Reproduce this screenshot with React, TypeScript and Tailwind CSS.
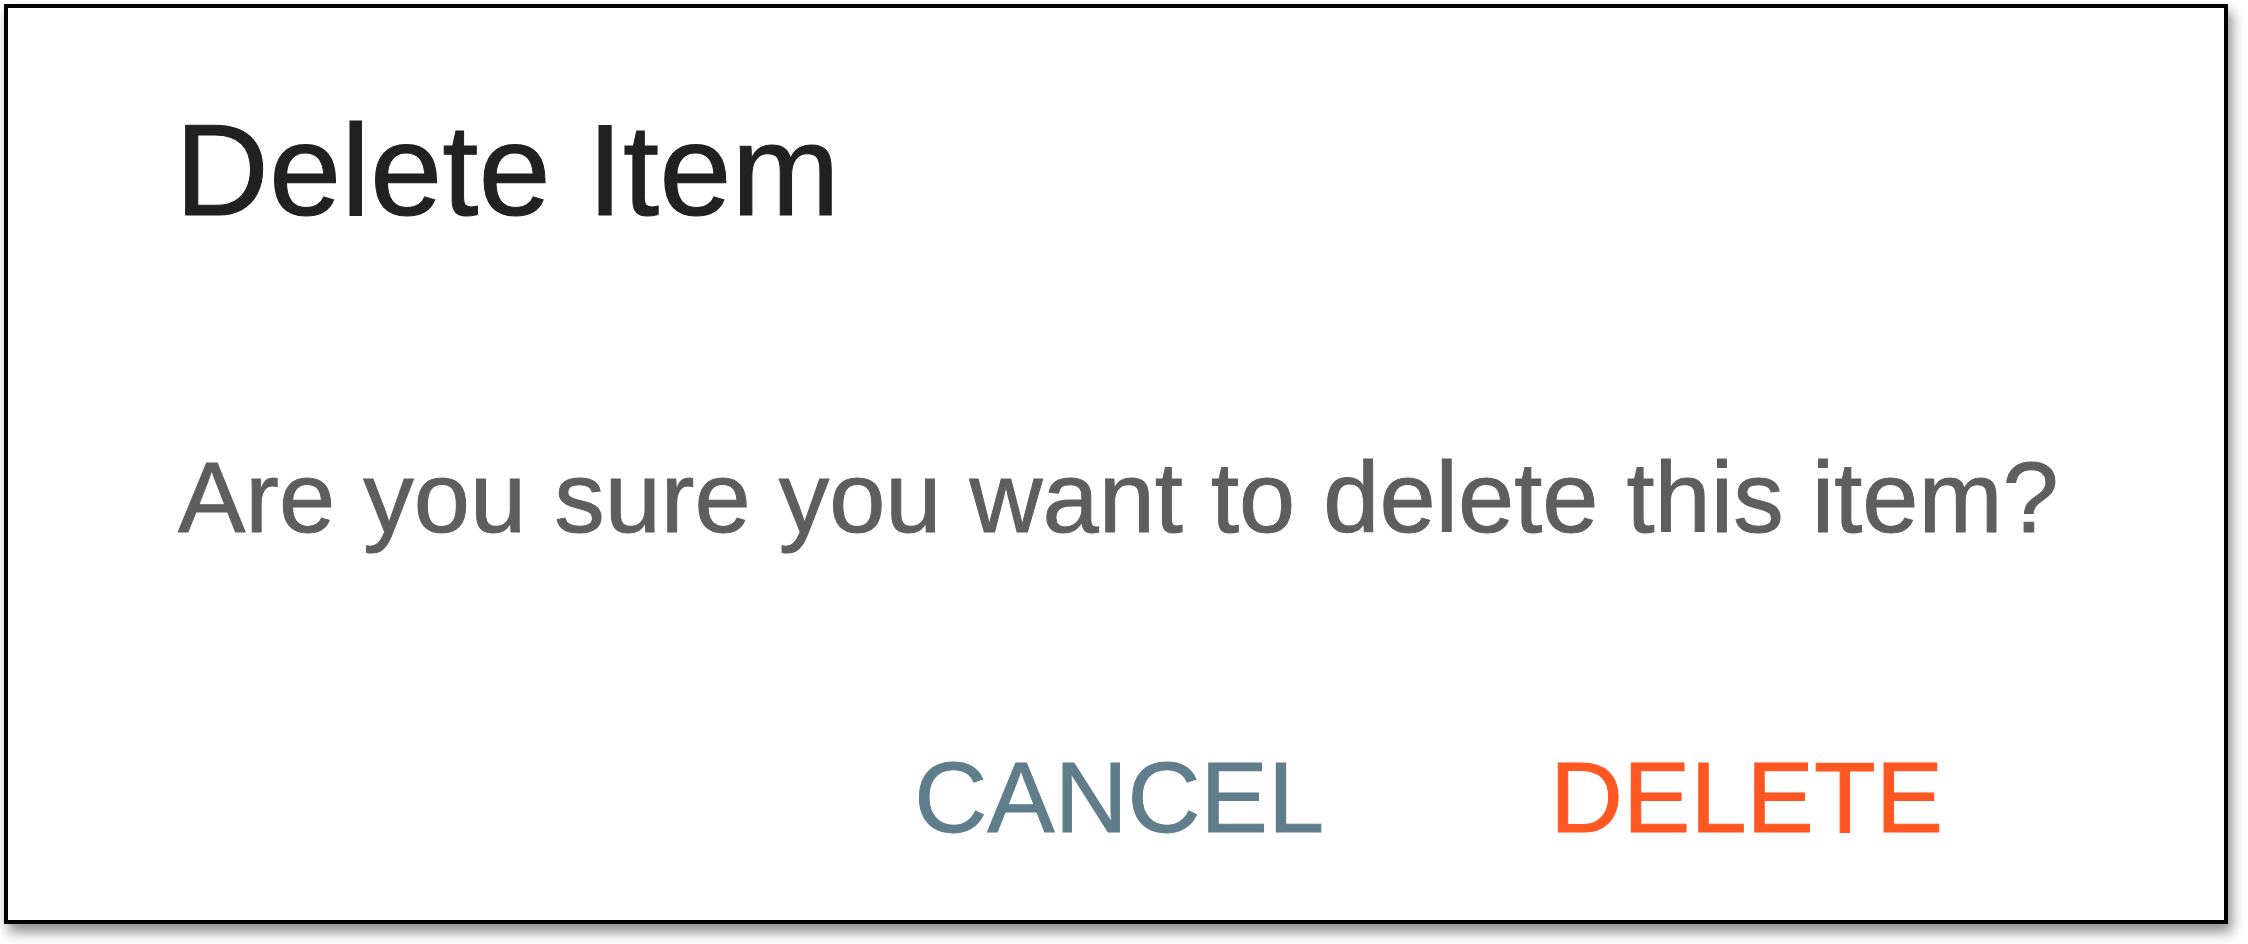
export default function App() {
  return (
    <div className="min-h-screen bg-white p-1" style={{ fontFamily: '"Liberation Sans", Arial, Helvetica, sans-serif' }}>
      {/* Confirm dialog */}
      <div className="flex h-[920px] w-[2224px] flex-col border-4 border-black bg-white shadow-[4px_8px_12px_rgba(0,0,0,0.45)]">
        <h1 className="pl-[167px] pt-[97px] text-[130px] leading-[130px] font-normal text-[#212121] [-webkit-text-stroke:1px_#212121]">
          Delete Item
        </h1>
        <p className="mt-[212px] pl-[170px] text-[101px] leading-[100px] text-[#5e5e5e] [-webkit-text-stroke:1px_#5e5e5e]">
          Are you sure you want to delete this item?
        </p>
        <div className="mt-[199px] flex justify-end gap-[226px] pr-[281px]">
          <button type="button" className="text-[101px] leading-[102px] text-[#607d8b] [-webkit-text-stroke:1px_#607d8b]">
            CANCEL
          </button>
          <button type="button" className="text-[101px] leading-[102px] text-[#ff5722] [-webkit-text-stroke:1px_#ff5722]">
            DELETE
          </button>
        </div>
      </div>
    </div>
  );
}
